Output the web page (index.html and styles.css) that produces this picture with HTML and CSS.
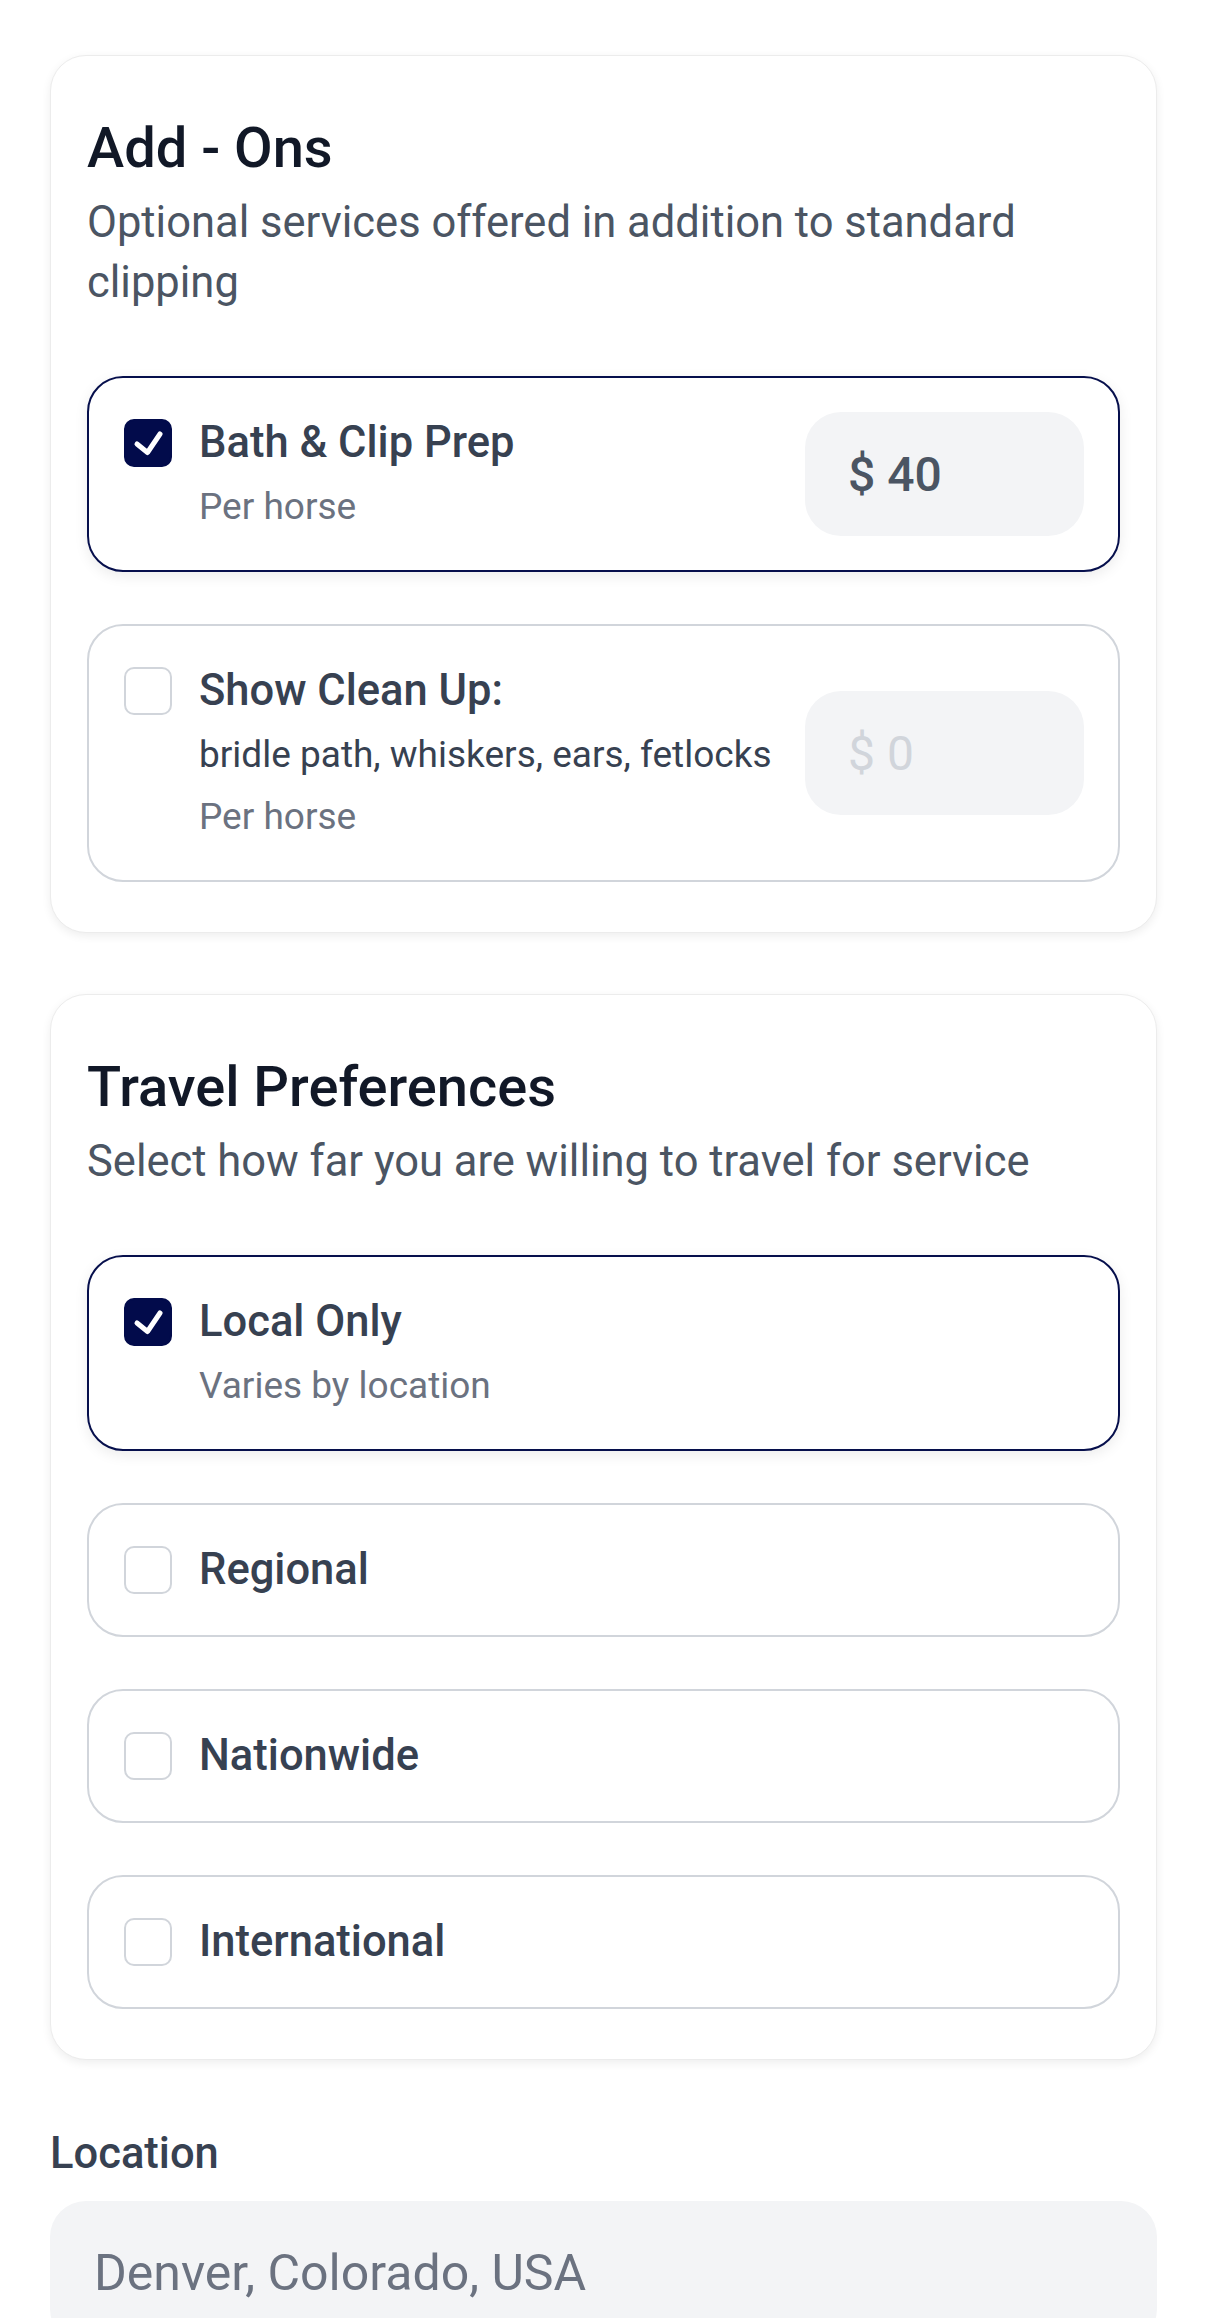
FILE: index.html
```html
<!DOCTYPE html>
<html lang="en">

<head>
    <meta charset="UTF-8">
    <meta name="viewport" content="width=device-width, initial-scale=1.0">
    <title>Services</title>
    <link rel="stylesheet" href="styles.css">
</head>

<body>
    <div class="page">

        <section class="card">
            <h2 class="card-title">Add - Ons</h2>
            <p class="card-desc">Optional services offered in addition to standard clipping</p>

            <div class="option-list">
                <div class="option selected">
                    <div class="option-main">
                        <span class="check on">
                            <svg viewBox="0 0 44 44"><path d="M11 23l10.5 8.5L34 13" /></svg>
                        </span>
                        <div class="option-text">
                            <div class="option-name">Bath &amp; Clip Prep</div>
                            <div class="option-note">Per horse</div>
                        </div>
                    </div>
                    <div class="price">$ 40</div>
                </div>

                <div class="option">
                    <div class="option-main">
                        <span class="check"></span>
                        <div class="option-text">
                            <div class="option-name">Show Clean Up:</div>
                            <div class="option-detail">bridle path, whiskers, ears, fetlocks</div>
                            <div class="option-note">Per horse</div>
                        </div>
                    </div>
                    <div class="price empty">$ 0</div>
                </div>
            </div>
        </section>

        <section class="card">
            <h2 class="card-title">Travel Preferences</h2>
            <p class="card-desc">Select how far you are willing to travel for service</p>

            <div class="option-list">
                <div class="option selected">
                    <div class="option-main">
                        <span class="check on">
                            <svg viewBox="0 0 44 44"><path d="M11 23l10.5 8.5L34 13" /></svg>
                        </span>
                        <div class="option-text">
                            <div class="option-name">Local Only</div>
                            <div class="option-note">Varies by location</div>
                        </div>
                    </div>
                </div>

                <div class="option">
                    <div class="option-main">
                        <span class="check"></span>
                        <div class="option-text">
                            <div class="option-name">Regional</div>
                        </div>
                    </div>
                </div>

                <div class="option">
                    <div class="option-main">
                        <span class="check"></span>
                        <div class="option-text">
                            <div class="option-name">Nationwide</div>
                        </div>
                    </div>
                </div>

                <div class="option">
                    <div class="option-main">
                        <span class="check"></span>
                        <div class="option-text">
                            <div class="option-name">International</div>
                        </div>
                    </div>
                </div>
            </div>
        </section>

        <label for="location" class="field-label">Location</label>
        <input class="field" type="text" id="location" value="Denver, Colorado, USA" readonly>

    </div>
</body>

</html>
```

FILE: styles.css
```css
body {
    margin: 0;
    background-color: #ffffff;
    font-family: Roboto, "Liberation Sans", Arial, sans-serif;
    color: #374151;
}

.page {
    padding: 55px 49px 0 50px;
    display: flex;
    flex-direction: column;
}

.card {
    background-color: #ffffff;
    border: 1px solid #ececec;
    border-radius: 36px;
    box-shadow: 0 3px 10px rgba(0, 0, 0, 0.07);
    padding: 56px 36px 50px;
    margin-bottom: 61px;
}

.card-title {
    margin: 0;
    font-size: 56px;
    line-height: 72px;
    font-weight: 500;
    color: #111827;
}

.card-desc {
    margin: 9px 0 0;
    font-size: 43.5px;
    line-height: 60px;
    color: #4b5563;
}

.option-list {
    display: flex;
    flex-direction: column;
    gap: 52px;
    margin-top: 63px;
}

.option {
    display: flex;
    align-items: center;
    border: 2px solid #d1d5db;
    border-radius: 36px;
    padding: 34px 34px 34px 35px;
}

.option.selected {
    border-color: #060f4c;
    box-shadow: 0 4px 14px rgba(0, 0, 0, 0.08);
}

.option-main {
    flex: 1;
    display: flex;
    align-items: flex-start;
    gap: 27px;
}

.check {
    flex: none;
    box-sizing: border-box;
    width: 48px;
    height: 48px;
    margin-top: 7px;
    border: 2px solid #d1d5db;
    border-radius: 10px;
    background-color: #ffffff;
}

.check.on {
    background-color: #020b4b;
    border-color: #020b4b;
}

.check svg {
    display: block;
    width: 100%;
    height: 100%;
    fill: none;
    stroke: #ffffff;
    stroke-width: 5;
    stroke-linecap: round;
    stroke-linejoin: round;
}

.option-name {
    font-size: 43.5px;
    line-height: 62px;
    font-weight: 500;
    color: #374151;
}

.option-detail,
.option-note {
    margin-top: 4px;
    font-size: 37px;
    line-height: 58px;
}

.option-detail {
    color: #374151;
}

.option-note {
    color: #6b7280;
}

.price {
    flex: none;
    box-sizing: border-box;
    width: 279px;
    height: 124px;
    padding-left: 43px;
    display: flex;
    align-items: center;
    background-color: #f3f4f6;
    border-radius: 36px;
    font-size: 48px;
    font-weight: 500;
    color: #4b5563;
}

.price.empty {
    font-weight: 400;
    color: #d1d5db;
}

.field-label {
    margin-top: 3px;
    font-size: 43.5px;
    line-height: 60px;
    font-weight: 500;
    color: #374151;
}

.field {
    margin-top: 17px;
    box-sizing: border-box;
    width: 100%;
    height: 144px;
    padding: 0 44px;
    border: 0;
    border-radius: 36px;
    background-color: #f3f4f6;
    font-family: Roboto, "Liberation Sans", Arial, sans-serif;
    font-size: 50px;
    color: #6b7280;
    outline: none;
}
```
